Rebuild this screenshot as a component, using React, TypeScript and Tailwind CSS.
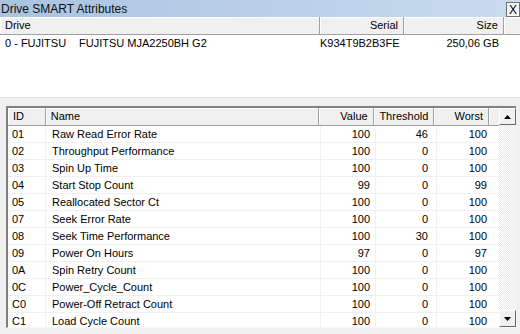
import React from "react"

const rows = [
	{ id: "01", name: "Raw Read Error Rate", value: 100, threshold: 46, worst: 100 },
	{ id: "02", name: "Throughput Performance", value: 100, threshold: 0, worst: 100 },
	{ id: "03", name: "Spin Up Time", value: 100, threshold: 0, worst: 100 },
	{ id: "04", name: "Start Stop Count", value: 99, threshold: 0, worst: 99 },
	{ id: "05", name: "Reallocated Sector Ct", value: 100, threshold: 0, worst: 100 },
	{ id: "07", name: "Seek Error Rate", value: 100, threshold: 0, worst: 100 },
	{ id: "08", name: "Seek Time Performance", value: 100, threshold: 30, worst: 100 },
	{ id: "09", name: "Power On Hours", value: 97, threshold: 0, worst: 97 },
	{ id: "0A", name: "Spin Retry Count", value: 100, threshold: 0, worst: 100 },
	{ id: "0C", name: "Power_Cycle_Count", value: 100, threshold: 0, worst: 100 },
	{ id: "C0", name: "Power-Off Retract Count", value: 100, threshold: 0, worst: 100 },
	{ id: "C1", name: "Load Cycle Count", value: 100, threshold: 0, worst: 100 },
]

function HeaderCell({ className = "", children }: { className?: string; children?: React.ReactNode }) {
	return (
		<div
			className={`flex h-full items-center border-r border-b border-r-[#a0a0a0] border-b-[#a0a0a0] bg-[#f0f0f0] px-[5px] shadow-[inset_1px_1px_0_#fff] ${className}`}
		>
			{children}
		</div>
	)
}

function ArrowButton({ up }: { up?: boolean }) {
	return (
		<div className="flex h-[17px] w-[17px] shrink-0 items-center justify-center border border-t-white border-l-white border-r-[#696969] border-b-[#696969] bg-[#f0f0f0]">
			<svg width="7" height="4" viewBox="0 0 7 4">
				<path d={up ? "M0 4 L3.5 0 L7 4 Z" : "M0 0 L3.5 4 L7 0 Z"} fill="#000" />
			</svg>
		</div>
	)
}

export default function App() {
	return (
		<div className="flex h-[334px] w-[520px] flex-col overflow-hidden bg-[#f0f0f0] font-['Liberation_Sans',Arial,sans-serif] text-[11px] text-black">
			{/* Title bar */}
			<div className="flex h-[17px] shrink-0 items-center justify-between bg-gradient-to-r from-[#a9c3df] to-[#c9dbef] pl-px">
				<span className="text-[12px] leading-none text-[#111]">Drive SMART Attributes</span>
				<div className="mt-[2px] flex h-[15px] w-[14px] items-center justify-center border border-[#707070] bg-[#f4f4f4] text-[12px] leading-none">
					X
				</div>
			</div>

			{/* Drive list */}
			<div className="h-[81px] shrink-0 border-b border-[#dcdcdc] bg-white">
				<div className="flex h-[18px]">
					<HeaderCell className="w-[320px]">Drive</HeaderCell>
					<HeaderCell className="w-[84px] justify-end">Serial</HeaderCell>
					<HeaderCell className="w-[100px] justify-end">Size</HeaderCell>
					<HeaderCell className="flex-1 border-r-0" />
				</div>
				<div className="flex h-[17px] items-center">
					<span className="w-[79px] pl-[5px]">0 - FUJITSU</span>
					<span className="w-[241px]">FUJITSU MJA2250BH G2</span>
					<span className="w-[84px] pr-[5px] text-right">K934T9B2B3FE</span>
					<span className="w-[100px] pr-[5px] text-right">250,06 GB</span>
				</div>
			</div>

			{/* Attribute table */}
			<div className="mt-[8px] ml-[6px] flex h-[222px] w-[510px] shrink-0 overflow-hidden border-t-2 border-l-2 border-b border-t-[#808080] border-l-[#808080] border-b-[#f8f8f8] bg-white">
				<div className="flex h-full min-w-0 flex-1 flex-col overflow-hidden">
					<div className="flex h-[18px] shrink-0">
						<HeaderCell className="w-[38px]">ID</HeaderCell>
						<HeaderCell className="w-[275px]">Name</HeaderCell>
						<HeaderCell className="w-[55px] justify-end">Value</HeaderCell>
						<HeaderCell className="w-[61px] justify-end">Threshold</HeaderCell>
						<HeaderCell className="w-[55px] justify-end">Worst</HeaderCell>
						<HeaderCell className="flex-1 border-r-0 px-0" />
					</div>
					{rows.map((r) => (
						<div key={r.id} className="flex h-[17px] shrink-0 border-b border-[#f0f0f0]">
							<div className="flex w-[38px] items-center border-r border-[#f0f0f0] pl-[4px]">{r.id}</div>
							<div className="flex w-[275px] items-center border-r border-[#f0f0f0] pl-[6px]">{r.name}</div>
							<div className="flex w-[55px] items-center justify-end border-r border-[#f0f0f0] pr-[5px]">{r.value}</div>
							<div className="flex w-[61px] items-center justify-end border-r border-[#f0f0f0] pr-[8px]">{r.threshold}</div>
							<div className="flex w-[55px] items-center justify-end pr-[5px]">{r.worst}</div>
						</div>
					))}
				</div>
				<div className="flex h-full w-[17px] shrink-0 flex-col">
					<ArrowButton up />
					<div className="flex-1 bg-[repeating-conic-gradient(#e8e8e8_0_25%,#ffffff_0_50%)] bg-[length:2px_2px]" />
					<ArrowButton />
				</div>
			</div>
		</div>
	)
}
